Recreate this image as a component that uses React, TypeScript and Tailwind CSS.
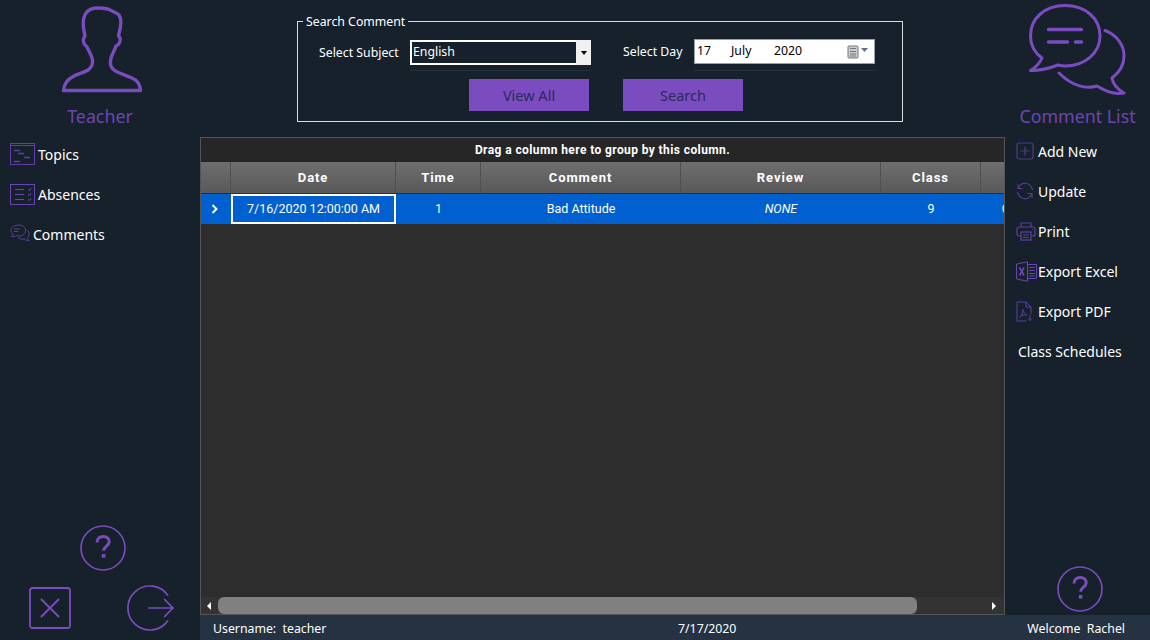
import type { ReactNode } from 'react';

const columns = [
  { label: 'Date', width: 'w-[165px]' },
  { label: 'Time', width: 'w-[85px]' },
  { label: 'Comment', width: 'w-[200px]' },
  { label: 'Review', width: 'w-[200px]' },
  { label: 'Class', width: 'w-[100px]' },
];

function TopicsIcon() {
  return (
    <svg width="26" height="23" viewBox="0 0 26 23" fill="none" stroke="#5f3da6" strokeWidth="1">
      <rect x="0.5" y="0.5" width="24" height="21" />
      <path d="M1 2.500h24" />
      <path d="M4 7.500h6M8 10.500h6M14 14.500h6M4 18.500h6" strokeWidth="1.400" />
    </svg>
  );
}

function AbsencesIcon() {
  return (
    <svg width="26" height="23" viewBox="0 0 26 23" fill="none" stroke="#6a44b4" strokeWidth="1">
      <rect x="0.5" y="1.500" width="24" height="20" />
      <path d="M5 6.500h9M5 11.500h9M5 16.500h9" />
      <path d="M18 6.500l1.500 1.200L21 5M18 11.500l1.500 1.200L21 10M18 16.500l1.500 1.200L21 15" />
    </svg>
  );
}

function SmallChatIcon() {
  return (
    <svg width="21" height="21" viewBox="0 0 21 21" fill="none" stroke="#5f3da6" strokeWidth="1">
      <path d="M9 1c4 0 6.500 2.600 6.500 5.500S13 12 9.500 12c-1 0-2-.1-3-.5C5 12.500 3.500 13 1.500 12.500 3 11.500 3.200 10.800 3 10 1.500 9 1 8 1 6.500 1 3.500 4.500 1 9 1z" />
      <path d="M4 5h6M4 7.500h4" />
      <path d="M16.500 6c2 1 3 2.500 2.500 5-.2 1-.8 2-1.500 2.500 0 1 .5 2 1.500 3-2 .2-3.500-.5-4.500-1.500-2.500.5-5 0-6.500-2" />
    </svg>
  );
}

function AddIcon() {
  return (
    <svg width="18" height="18" viewBox="0 0 18 18" fill="none" stroke="#4f3a85" strokeWidth="1.200">
      <rect x="1" y="1" width="16" height="16" rx="2" />
      <path d="M9 4.500v9M4.500 9h9" />
    </svg>
  );
}

function UpdateIcon() {
  return (
    <svg width="18" height="18" viewBox="0 0 18 18" fill="none" stroke="#5a3d96" strokeWidth="1.100">
      <path d="M2.500 6C4 2.500 7 1 9.500 1.300 13 1.600 16 4.500 16.500 8" />
      <path d="M15.500 12c-1.500 3.500-4.500 5-7 4.700C5 16.400 2 13.500 1.500 10" />
      <path d="M2 2v4.500h4.500M16 16v-4.500h-4.500" />
    </svg>
  );
}

function PrintIcon() {
  return (
    <svg width="20" height="19" viewBox="0 0 20 19" fill="none" stroke="#5f3da6" strokeWidth="1.200">
      <path d="M5 5V1h10v4" />
      <rect x="1" y="5" width="18" height="9" rx="2" />
      <rect x="5" y="10" width="10" height="8" fill="#17212b" />
      <path d="M7 13h6M7 15.500h6" />
      <path d="M16 7.500h1" />
    </svg>
  );
}

function ExcelIcon() {
  return (
    <svg width="21" height="21" viewBox="0 0 21 21" fill="none" stroke="#6a44b4" strokeWidth="1">
      <path d="M.5 3L11.500.8v19.400L.5 18z" />
      <path d="M11.500 3.500h9v14h-9M13 6.500h6M13 9.500h6M13 12.500h6M13 15h6" />
      <path d="M3.500 6.500l4.500 8M8 6.500l-4.500 8" strokeWidth="1.700" />
    </svg>
  );
}

function PdfIcon() {
  return (
    <svg width="18" height="21" viewBox="0 0 18 21" fill="none" stroke="#5f3da6" strokeWidth="1">
      <path d="M10 20H1V1h9l5 5v7M10 1v5h5" />
      <path d="M3.500 16.500c2-1.500 3.500-5 3.500-8 .5 3 2 4.500 4 5.500-3-.5-5.500 0-7.500 2.500z" />
      <path d="M14 14v5.500M12 17.500l2 2 2-2" />
    </svg>
  );
}

function HelpCircle() {
  return (
    <svg width="46" height="46" viewBox="0 0 46 46" fill="none">
      <circle cx="23" cy="23" r="22" stroke="#7a4cc0" strokeWidth="1.600" />
      <path d="M17 17.500c0-3.800 2.700-6 6.200-6 3.500 0 6 2.200 6 5.200 0 4.300-5.500 4.500-5.500 9" stroke="#7a4cc0" strokeWidth="3" />
      <rect x="21.800" y="29" width="3.600" height="3.600" fill="#7a4cc0" />
    </svg>
  );
}

function SideItem({ icon, label, gap = 'gap-[1px]' }: { icon?: ReactNode; label: string; gap?: string }) {
  return (
    <div className={`flex h-10 items-center ${gap} text-[14px] text-white`}>
      {icon}
      <span>{label}</span>
    </div>
  );
}

function SidePanelTitle({ children }: { children: ReactNode }) {
  return <div className="text-center text-[17.800px] leading-6 text-[#6d45b5]">{children}</div>;
}

export default function App() {
  return (
    <div className="flex h-[640px] w-[1150px] overflow-hidden bg-[#17212b] font-['Noto_Sans',sans-serif] text-white">
      {/* Left menu */}
      <aside className="flex h-full w-[200px] shrink-0 flex-col">
        <div className="flex justify-center pl-[4px] pt-[6px]">
          <svg width="84" height="87" viewBox="60 6 84 87" fill="none" stroke="#7a4cc0" strokeWidth="3.400" strokeLinejoin="round">
            <path d="M63.500 90.500H140.500C140 84 137 80 132 78C125 75 118 73 114 70C110 67 110 62 111 58C112 54 115 50 116 46C119 45 121 41 120 38C119.500 37 119 36.500 118.500 35.500C121 27 122 19 119 15C117 13 114 12 112 11C108 8 103 8 98 8C92 8 88 10 86 13C83 17 83 23 83.500 28C84 31 84.500 34 85 36C83 38 82.500 42 85 45C87 46 87 47 88 49C90 53 92 56 92.500 60C93 65 91 68 88 70C85 72 78 74 74 76C68 79 64 83 63.500 90.500z" />
          </svg>
        </div>
        <div className="mt-[11px]">
          <SidePanelTitle>Teacher</SidePanelTitle>
        </div>
        <div className="mt-[6px] flex flex-col pl-[10px]">
          <SideItem icon={<TopicsIcon />} label="Topics" gap="gap-[2px]" />
          <SideItem icon={<AbsencesIcon />} label="Absences" gap="gap-[2px]" />
          <SideItem icon={<SmallChatIcon />} label="Comments" gap="gap-[2px]" />
        </div>
        <div className="mt-auto flex justify-center pl-[6px]">
          <HelpCircle />
        </div>
        <div className="mt-[14px] mb-[9px] flex items-center pl-[29px]">
          <svg width="42" height="42" viewBox="0 0 42 42" fill="none" stroke="#7a4cc0" strokeWidth="1.800">
            <rect x="1" y="1" width="40" height="40" rx="2.500" />
            <path d="M12 12l18 18M30 12L12 30" />
          </svg>
          <svg width="48" height="46" viewBox="0 0 48 46" fill="none" stroke="#7a4cc0" strokeWidth="1.700" className="ml-[56px]">
            <path d="M41 10.500A22 22 0 1 0 41 35.500" />
            <path d="M21 23h25M37 14l9 9-9 9" />
          </svg>
        </div>
      </aside>

      {/* Center and status */}
      <div className="flex h-full min-w-0 flex-1 flex-col">
        <div className="flex min-h-0 flex-1">
          <main className="flex w-[805px] shrink-0 flex-col">
            <div className="h-[137px] shrink-0 pl-[97px] pt-[13px]">
              <fieldset className="h-[109px] w-[606px] border border-[#d8dce0]">
                <legend className="ml-[5px] px-[3px] text-[12.300px] leading-[17px]">Search Comment</legend>
                <div className="mt-[10px] flex items-start pl-[21px]">
                  <span className="mt-[1px] w-[91px] text-[12.300px] leading-[24px]">Select Subject</span>
                  <div className="border-b border-[#263241] pb-[5px]">
                    <div className="flex h-[25px] w-[181px] items-center border-2 border-r-0 border-white text-[12.300px]">
                      <span className="flex-1 pl-[1px]">English</span>
                      <span className="flex h-[25px] w-[15px] items-center justify-center bg-[#f0f0f0]">
                        <span className="border-x-[3px] border-t-[4px] border-x-transparent border-t-black" />
                      </span>
                    </div>
                  </div>
                  <span className="ml-[32px] w-[71px] text-[12.300px] leading-[24px]">Select Day</span>
                  <div className="-mt-[1px] border-b border-[#263241] pb-[6px]">
                    <div className="flex h-[25px] w-[181px] items-center border border-[#9aa0a8] bg-white pl-[2px] text-[12.300px] text-black">
                      <span className="w-[34px]">17</span>
                      <span className="w-[43px]">July</span>
                      <span className="flex-1">2020</span>
                      <svg width="22" height="14" viewBox="0 0 22 14" className="mr-[5px]">
                        <rect x="1" y="1" width="10" height="12" rx="1" fill="#c9cdd2" stroke="#777" strokeWidth="1" />
                        <path d="M3 3.500h6M3 6.500h6M3 9h6M3 11h6" stroke="#777" strokeWidth="1" />
                        <path d="M14 3h7l-3.500 4z" fill="#5a6f9a" />
                      </svg>
                    </div>
                  </div>
                </div>
                <div className="mt-[8px] flex pl-[171px]">
                  <button className="h-8 w-[120px] bg-[#7a4cc0] pt-[2px] text-[14.500px] text-[#2c2a5a]">View All</button>
                  <button className="ml-[34px] h-8 w-[120px] bg-[#7a4cc0] pt-[2px] text-[14.500px] text-[#2c2a5a]">Search</button>
                </div>
              </fieldset>
            </div>

            {/* Grid */}
            <div className="flex min-h-0 flex-1 flex-col border border-[#555] bg-[#2d2d2d] font-['Roboto',sans-serif]">
              <div className="flex h-6 shrink-0 items-center justify-center bg-[#262626] text-[12px] font-bold tracking-[0.4px]">
                Drag a column here to group by this column.
              </div>
              <div className="flex h-[31px] shrink-0 bg-gradient-to-b from-[#6e6e6e] to-[#595959] text-[13px] font-bold tracking-[0.9px]">
                <div className="w-[30px] border-r border-[#505050]" />
                {columns.map((col) => (
                  <div key={col.label} className={`flex ${col.width} items-center justify-center border-r border-[#505050]`}>
                    {col.label}
                  </div>
                ))}
                <div className="flex-1" />
              </div>
              <div className="flex h-[31px] shrink-0 overflow-hidden border-t border-[#2d2d2d] bg-[#0060d0] text-[12.500px]">
                <div className="flex w-[30px] items-center justify-center pr-[2px]">
                  <svg width="8" height="10" viewBox="0 0 8 10" fill="none" stroke="white" strokeWidth="2">
                    <path d="M1.500 1l4 4-4 4" />
                  </svg>
                </div>
                <div className="flex w-[165px] items-center justify-center border-2 border-white">7/16/2020 12:00:00 AM</div>
                <div className="flex w-[85px] items-center justify-center">1</div>
                <div className="flex w-[200px] items-center justify-center">Bad Attitude</div>
                <div className="flex w-[200px] items-center justify-center italic">NONE</div>
                <div className="flex w-[100px] items-center justify-center">9</div>
                <div className="flex flex-1 items-center justify-end overflow-hidden">
                  <span className="-mr-[6px]">C</span>
                </div>
              </div>
              <div className="flex-1" />
              <div className="flex h-[17px] shrink-0 items-center bg-[#333333]">
                <span className="ml-[6px] h-0 w-0 border-y-[4px] border-r-[4px] border-y-transparent border-r-white" />
                <div className="ml-[7px] h-[17px] w-[699px] rounded-[6px] bg-[#808080]" />
                <span className="ml-[75px] h-0 w-0 border-y-[4px] border-l-[4px] border-y-transparent border-l-white" />
              </div>
            </div>
          </main>

          {/* Right menu */}
          <aside className="flex min-w-0 flex-1 flex-col">
            <div className="flex justify-center pr-[2px] pt-[3px]">
              <svg width="98" height="94" viewBox="1028 3 98 94" fill="none" stroke="#7a4cc0" strokeWidth="3" strokeLinecap="round" strokeLinejoin="round">
                <path d="M1065 5.500C1045 5.500 1030.500 18 1030.500 36C1030.500 45 1035 53 1042 58C1040 63 1036 67 1030.500 70.500C1040 71 1050 68 1058 65C1060 65.500 1062 66 1065 66C1085 66 1100 53 1100 36C1100 18 1085 5.500 1065 5.500z" />
                <path d="M1105 30.500C1117 35 1124 45 1124 56C1124 65 1120 72 1112 78C1113 84 1117 89 1124 93C1112 95 1104 90 1097 86C1087 89 1073 87 1059 73" />
                <path d="M1048.500 29.500h33" strokeWidth="3.400" />
                <path d="M1048.500 42h19M1075.500 42h6" strokeWidth="3.400" />
              </svg>
            </div>
            <div className="mt-[7px]">
              <SidePanelTitle>Comment List</SidePanelTitle>
            </div>
            <div className="mt-[3px] flex flex-col pl-[11px]">
              <SideItem icon={<AddIcon />} label="Add New" gap="gap-[4px]" />
              <SideItem icon={<UpdateIcon />} label="Update" gap="gap-[4px]" />
              <SideItem icon={<PrintIcon />} label="Print" gap="gap-[2px]" />
              <SideItem icon={<ExcelIcon />} label="Export Excel" gap="gap-[1px]" />
              <SideItem icon={<PdfIcon />} label="Export PDF" gap="gap-[4px]" />
              <div className="pl-[2px]">
                <SideItem label="Class Schedules" />
              </div>
            </div>
            <div className="mt-auto flex justify-center pb-[3px] pl-[4px]">
              <HelpCircle />
            </div>
          </aside>
        </div>

        {/* Status bar */}
        <footer className="flex h-[25px] shrink-0 items-center bg-[#253241] pl-[13px] pr-[25px] pt-[3px] text-[12.300px]">
          <span className="w-[465px] whitespace-pre">Username:  teacher</span>
          <span className="flex-1">7/17/2020</span>
          <span className="whitespace-pre">Welcome  Rachel</span>
        </footer>
      </div>
    </div>
  );
}
